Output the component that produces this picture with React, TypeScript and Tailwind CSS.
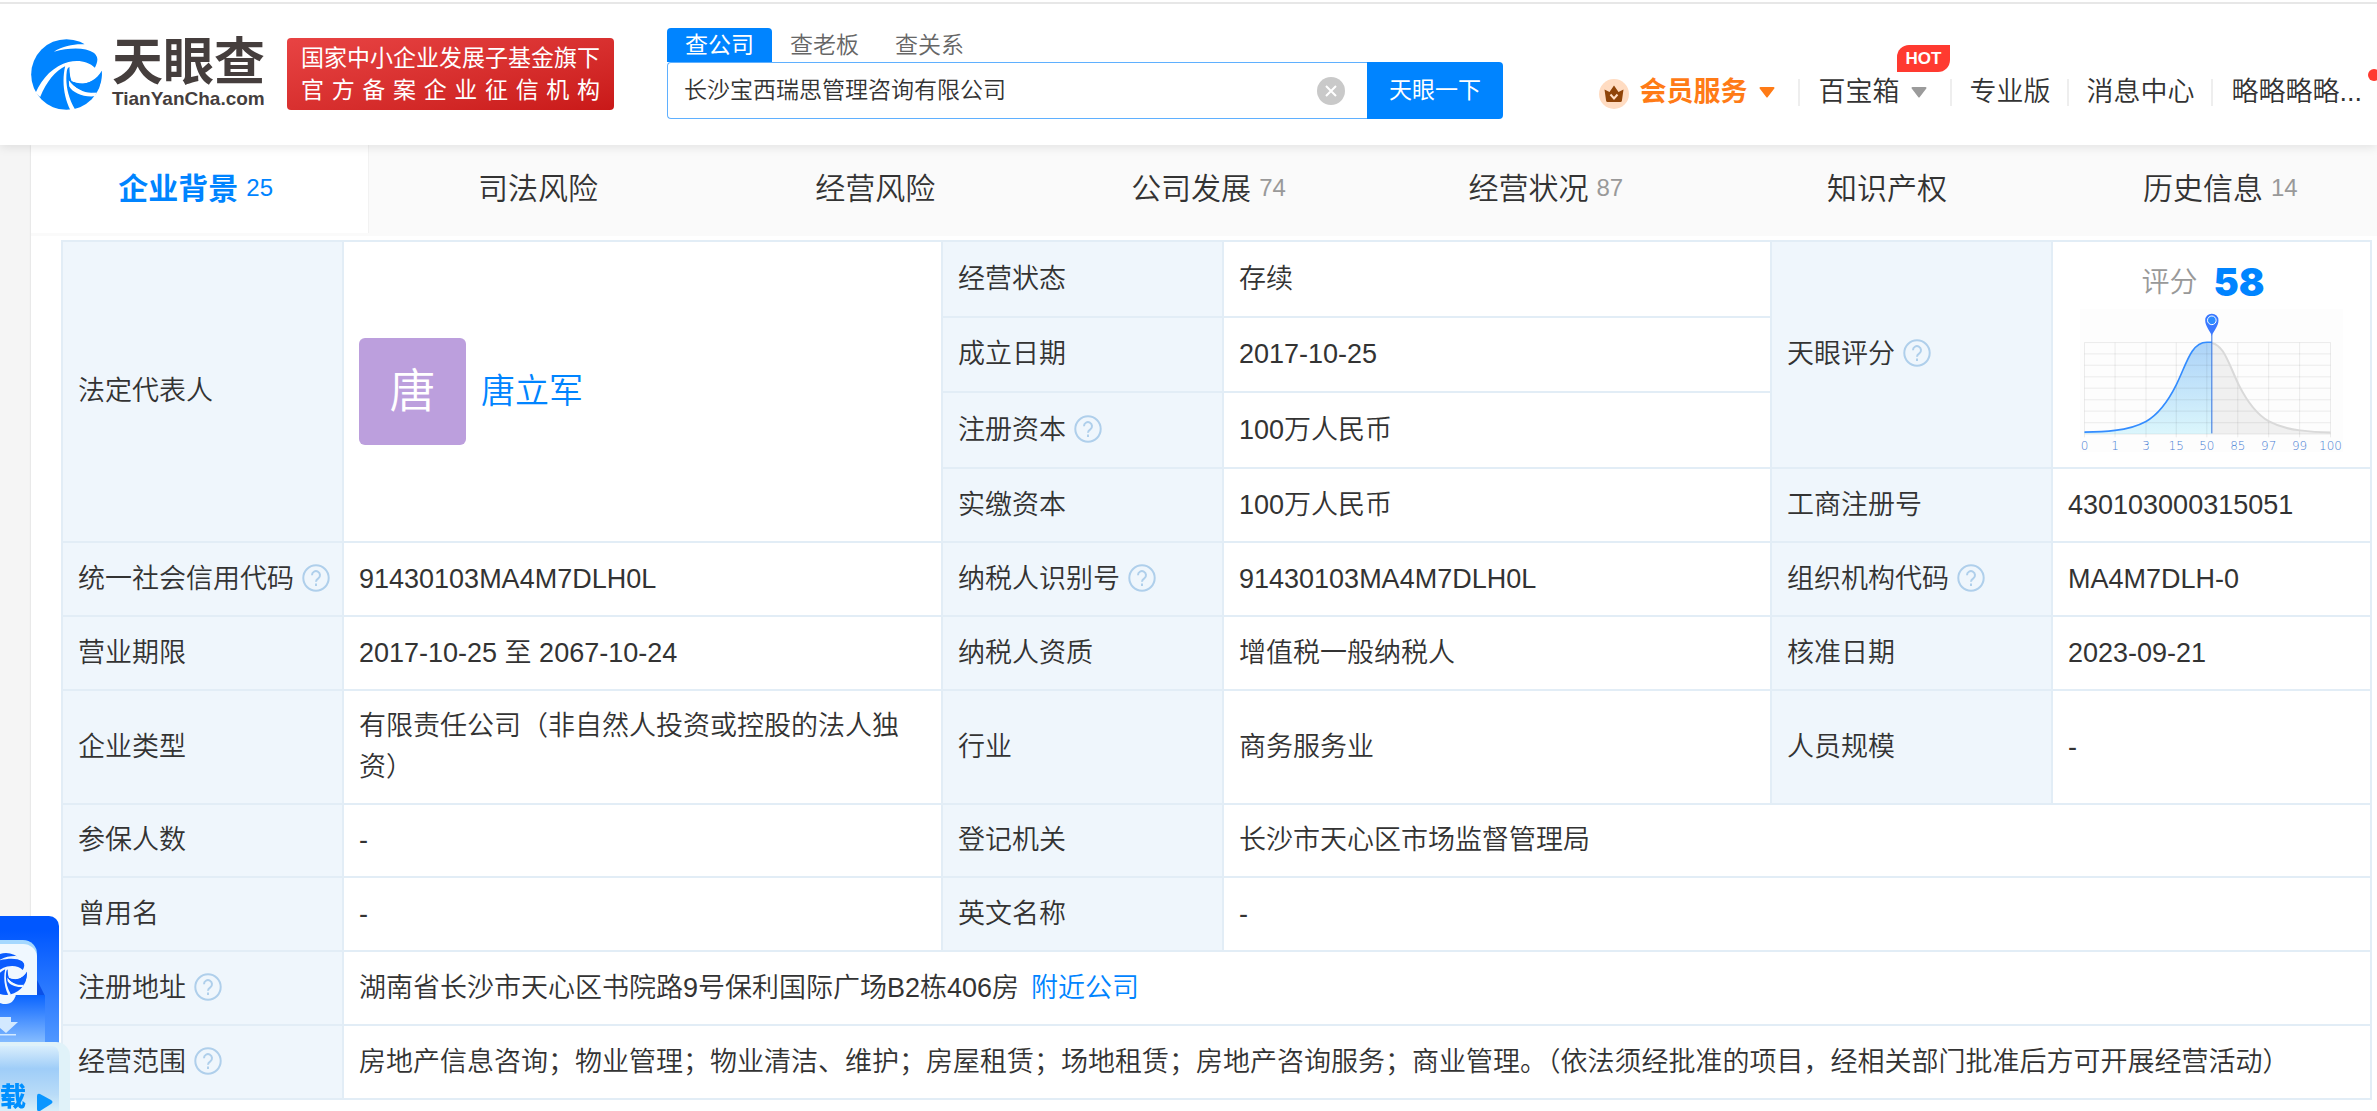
import React from "react";

function BrandMark({ className, color = "#0084ff", gap = "#fff" }: { className: string; color?: string; gap?: string }) {
  return (
    <svg viewBox="35 42 212 213" className={className} aria-hidden="true">
      <circle cx="141" cy="148.500" r="106" fill={color} />
      <g fill={gap}>
        <path d="M103 80C132 62 168 56 194 58L215 40L262 60V140L247 137C244 150 232 160 218 168C200 178 176 177 156 168C152 156 149 145 150 126C146 127 143 132 142 138C137 175 144 215 166 252L154 258C134 220 126 170 137 124C108 138 82 168 62 216L48 204C68 158 104 122 147 111C177 103 208 110 226 128C236 110 237 92 224 84C196 66 150 68 103 80Z" />
        <path d="M148 166C163 188 190 202 232 203L226 214C190 217 160 204 149 184Z" />
      </g>
      <path d="M150 122C149 150 155 163 161 171C188 185 226 172 247 137C247 170 238 190 228 202C200 207 172 196 149 166Z" fill={color} />
      <path d="M156 168C186 180 218 170 236 148C226 140 200 120 172 116C150 116 147 140 156 168Z" fill={gap} />
    </svg>
  );
}

function HelpIcon() {
  return (
    <button type="button" aria-label="说明" className="ml-2 inline-flex align-[-4px]">
      <svg viewBox="0 0 28 28" className="size-7" fill="none" stroke="#afcfeb" strokeWidth="2" aria-hidden="true">
        <circle cx="14" cy="14" r="12.700" />
        <path d="M10 11.200a4 4 0 1 1 6.300 3.200c-1.500 1-2.300 1.600-2.300 3.400" />
        <path d="M14 19.400v2.600" />
      </svg>
    </button>
  );
}

function Caret({ className }: { className: string }) {
  return (
    <svg viewBox="0 0 16 11" className={className} aria-hidden="true">
      <path d="M1.500 0h13a1 1 0 0 1 .8 1.600L8.800 10a1 1 0 0 1-1.600 0L.7 1.600A1 1 0 0 1 1.500 0Z" fill="currentColor" />
    </svg>
  );
}

function Crown() {
  return (
    <svg viewBox="0 0 30 30" className="mt-1 mr-2.5 size-[30px]" aria-hidden="true">
      <circle cx="15" cy="15" r="15" fill="#ffdcc2" />
      <path d="M5.500 10.500l5 2.500L15 6.500l4.500 6.500 5-2.500-1.600 11.200a1.500 1.500 0 0 1-1.500 1.300H8.600a1.500 1.500 0 0 1-1.500-1.300Z" fill="#8f4409" />
      <path d="M11.500 15.500l3.500 4 3.500-4" fill="none" stroke="#ffdcc2" strokeWidth="2" />
    </svg>
  );
}

const GRID_X = [131, 223, 316, 407, 499, 592, 685, 778, 871];
const GRID_Y = [321, 355, 389, 424, 458, 493, 527, 562, 596];
const TICKS = ["0", "1", "3", "15", "50", "85", "97", "99", "100"];

function ScoreChart() {
  return (
    <svg viewBox="112 220 802 430" className="mx-auto block h-[143px] w-[267px]" role="img" aria-label="评分分布">
      <defs>
        <linearGradient id="area" x1="0" y1="0" x2="0" y2="1">
          <stop offset="0" stopColor="#acd3f8" />
          <stop offset="1" stopColor="#dbf6fc" />
        </linearGradient>
      </defs>
      <rect x="118" y="220" width="790" height="430" fill="#fdfdfd" />
      <path d="M503 320C520 320 534 328 547 347C564 372 577 412 595 448C617 492 647 536 686 558C712 572 744 581 779 585C807 589 837 591 871 591V596H503Z" fill="#f0f0f0" />
      <path d="M131 590C165 590 195 589 223 585C258 581 290 572 316 558C355 536 385 492 407 448C425 412 438 372 455 347C468 328 482 320 499 320H514V596H131Z" fill="url(#area)" />
      <g stroke="#000" strokeOpacity="0.080" strokeWidth="3">
        {GRID_X.map((x) => <line key={x} x1={x} x2={x} y1="321" y2="606" />)}
        {GRID_Y.map((y) => <line key={y} x1="131" x2="871" y1={y} y2={y} />)}
      </g>
      <path d="M514 322C528 325 538 334 547 347C564 372 577 412 595 448C617 492 647 536 686 558C712 572 744 581 779 585C807 589 837 591 871 591" fill="none" stroke="#d9d9d9" strokeWidth="6" />
      <path d="M131 590C165 590 195 589 223 585C258 581 290 572 316 558C355 536 385 492 407 448C425 412 438 372 455 347C468 328 482 320 499 320H514" fill="none" stroke="#338cff" strokeWidth="5" />
      <path d="M514 296V594" stroke="#2f6fe0" strokeWidth="3" />
      <path d="M514 301C509 287 494 272 494 254A20 20 0 0 1 534 254C534 272 519 287 514 301Z" fill="#3a78ff" />
      <circle cx="514" cy="254" r="13" fill="#2c8cff" stroke="#fff" strokeWidth="3" />
      {TICKS.map((t, i) => (
        <text key={t} x={GRID_X[i]} y="643" textAnchor="middle" fontSize="36" fill="#4a7fd4" className="font-['DejaVu_Sans',sans-serif]">{t}</text>
      ))}
    </svg>
  );
}

function Th({ children, help, rowSpan }: { children: React.ReactNode; help?: boolean; rowSpan?: number }) {
  return (
    <th scope="row" rowSpan={rowSpan} className="border-2 border-[#e2edf6] bg-[#eff6fc] px-[15px] text-left align-middle font-[350] whitespace-nowrap">
      {children}
      {help && <HelpIcon />}
    </th>
  );
}

function Td({ children, rowSpan, colSpan }: { children: React.ReactNode; rowSpan?: number; colSpan?: number }) {
  return (
    <td rowSpan={rowSpan} colSpan={colSpan} className="border-2 border-[#e2edf6] px-[15px] align-middle">
      {children}
    </td>
  );
}

const TABS: { name: string; count?: number }[] = [
  { name: "企业背景", count: 25 },
  { name: "司法风险" },
  { name: "经营风险" },
  { name: "公司发展", count: 74 },
  { name: "经营状况", count: 87 },
  { name: "知识产权" },
  { name: "历史信息", count: 14 },
];

function Separator() {
  return <span className="h-[27px] w-0.5 bg-[#eeeeee]" />;
}

function Header() {
  return (
    <header className="relative z-10 flex h-[145px] items-start border-t-2 border-white bg-white pl-[31px] shadow-[0_2px_10px_rgba(0,0,0,0.100)]">
      <div className="absolute inset-x-0 top-0 h-0.5 bg-[#e7e7e7]" />
      <a href="#home" className="mt-9 flex gap-[10px]">
        <BrandMark className="mt-px size-[71px]" />
        <span className="flex w-[154px] flex-col text-[#453e3d]">
          <span className="text-[51px]/[50px] font-bold whitespace-nowrap">天眼查</span>
          <span className="text-[19px]/[22px] font-bold">TianYanCha.com</span>
        </span>
      </a>
      <div className="mt-9 ml-[21px] h-[72px] w-[327px] rounded bg-linear-to-br from-[#e84343] to-[#c91818] px-[14px] pt-1 text-[23px]/8 font-normal whitespace-nowrap text-white">
        <p>国家中小企业发展子基金旗下</p>
        <p className="[text-align-last:justify]">官方备案企业征信机构</p>
      </div>
      <form className="mt-[26px] ml-[53px] w-[836px]" onSubmit={(e) => e.preventDefault()}>
        <div className="flex h-[34px] text-[23px]/[34px]">
          <button type="button" className="rounded-t bg-[#0084ff] px-[18px] font-normal text-white">查公司</button>
          <button type="button" className="px-[18px] text-[#666]">查老板</button>
          <button type="button" className="px-[18px] text-[#666]">查关系</button>
        </div>
        <div className="flex h-[57px]">
          <div className="flex flex-1 items-center rounded-l border border-r-0 border-[#5fb0ff] pr-[22px] pl-4">
            <input aria-label="公司名称" defaultValue="长沙宝西瑞思管理咨询有限公司" className="min-w-0 flex-1 text-[23px] text-[#333] outline-none" />
            <button type="button" aria-label="清除">
              <svg viewBox="0 0 28 28" className="size-7" aria-hidden="true">
                <circle cx="14" cy="14" r="14" fill="#c9c9c9" />
                <path d="M9 9l10 10M19 9L9 19" stroke="#fff" strokeWidth="2" />
              </svg>
            </button>
          </div>
          <button type="submit" className="w-[136px] rounded-r bg-[#0084ff] text-[23px] font-normal text-white">天眼一下</button>
        </div>
      </form>
      <nav className="mt-[70px] ml-auto flex h-10 items-center text-[27px]/10 whitespace-nowrap text-[#333]">
        <a href="#vip" className="flex items-center pr-[23px] font-bold text-[#ff7b16]">
          <Crown />会员服务<Caret className="ml-[12px] h-[11px] w-4" />
        </a>
        <Separator />
        <a href="#tools" className="relative flex items-center pr-[23px] pl-[18px]">
          百宝箱<Caret className="ml-[12px] h-[11px] w-4 text-[#9b9b9b]" />
          <span className="absolute -top-[27px] right-0 rounded-tl-xl rounded-br-xl bg-[#ff3a30] px-[9px] text-[17px]/[27px] font-bold text-white">HOT</span>
        </a>
        <Separator />
        <a href="#pro" className="px-[17px]">专业版</a>
        <Separator />
        <a href="#messages" className="px-[17px]">消息中心</a>
        <Separator />
        <a href="#account" className="relative pr-[15px] pl-[18px]">
          略略略略...
          <span className="absolute -top-[3px] -right-[3px] size-3 rounded-full bg-[#ff3a30]" />
        </a>
      </nav>
    </header>
  );
}

function DownloadWidget() {
  return (
    <a href="#download" aria-label="下载" className="fixed bottom-0 left-0 z-20 block h-[195px] w-[70px] overflow-hidden">
      <svg viewBox="0 0 70 195" className="absolute inset-0 size-full" aria-hidden="true">
        <defs>
          <linearGradient id="panel" x1="0" y1="0" x2="0" y2="1">
            <stop offset="0.100" stopColor="#0057ff" />
            <stop offset="1" stopColor="#5a9fff" />
          </linearGradient>
          <linearGradient id="folder" x1="0" y1="0" x2="0" y2="1">
            <stop offset="0" stopColor="#0a64ff" />
            <stop offset="1" stopColor="#8fc3ff" />
          </linearGradient>
          <linearGradient id="glass" x1="0" y1="0" x2="0" y2="1">
            <stop offset="0" stopColor="#d9eefc" />
            <stop offset="0.350" stopColor="#9fcdf8" />
            <stop offset="0.750" stopColor="#b9dcf8" />
            <stop offset="1" stopColor="#d9eff8" />
          </linearGradient>
        </defs>
        <path d="M0 0H49A10 10 0 0 1 59 10V140H0Z" fill="url(#panel)" />
        <path d="M37 64L45 80V85H37Z" fill="#0a50e8" />
        <path d="M0 24H23A14 14 0 0 1 37 38V80H0Z" fill="#a5d8ff" />
        <path d="M0 28H23A14 14 0 0 1 37 40V80H0Z" fill="#f0f8ff" />
        <path d="M0 79H45V130H0Z" fill="url(#folder)" />
        <path d="M0 78H16C15 84 11 88 6 88C4 88 2 88 0 87Z" fill="#f0f8ff" />
        <path d="M0 101H11V106H18L6 117L0 112ZM0 118H16V119.500H0Z" fill="#d3e9ff" />
        <path d="M0 126H56A14 14 0 0 1 70 140V195H0Z" fill="#e0f2f9" />
        <path d="M0 130H52Q59 130 59 140V195H0Z" fill="url(#glass)" />
        <path d="M37 180q0-3 3-2l11 6q3 2 0 4l-11 7q-3 1-3-2Z" fill="#0a96ff" />
      </svg>
      <span className="absolute top-[37px] -left-[15px]">
        <BrandMark className="size-[42px]" color="#0a5cff" gap="#f0f8ff" />
      </span>
      <span className="absolute top-[168px] left-0 text-[26px]/[27px] font-black text-[#0090ff]">载</span>
    </a>
  );
}

export default function App() {
  return (
    <div className="min-h-screen overflow-hidden bg-[#f5f5f5] font-['Liberation_Sans','Noto_Sans_CJK_SC',sans-serif] font-[350] text-[#333]">
      <Header />
      <main className="ml-[31px] min-h-[966px] bg-white shadow-[0_0_2px_rgba(0,0,0,0.150)]">
        <nav className="-mr-4 flex h-[91px] border-b-[3px] border-[#fafafa] bg-[#fafafa]">
          {TABS.map((tab, i) => (
            <a
              key={tab.name}
              href={"#" + tab.name}
              className={
                i === 0
                  ? "flex flex-1 items-center justify-center gap-2 border-r border-[#f2f2f2] bg-white pb-0.5 text-[30px] font-bold text-[#0084ff]"
                  : "flex flex-1 items-center justify-center gap-2 pb-0.5 text-[30px] text-[#333]"
              }
            >
              {tab.name}
              {tab.count && <span className={i === 0 ? "mr-2 text-[24px] font-normal" : "mr-2 text-[24px] text-[#999]"}>{tab.count}</span>}
            </a>
          ))}
        </nav>
        <div className="pt-1 pr-[5px] pl-[30px]">
          <table className="w-full table-fixed border-collapse text-[27px]/[41px]">
            <colgroup>
              <col className="w-[281px]" />
              <col className="w-[599px]" />
              <col className="w-[281px]" />
              <col className="w-[548px]" />
              <col className="w-[281px]" />
              <col />
            </colgroup>
            <tbody>
              <tr className="h-[76px]">
                <Th rowSpan={4}>法定代表人</Th>
                <Td rowSpan={4}>
                  <div className="flex items-center gap-[15px]">
                    <span className="flex size-[107px] items-center justify-center rounded-md bg-[#bc9fdd] text-[46px] text-white">唐</span>
                    <a href="#person" className="text-[34px] text-[#0084ff]">唐立军</a>
                  </div>
                </Td>
                <Th>经营状态</Th>
                <Td>存续</Td>
                <Th rowSpan={3} help>天眼评分</Th>
                <Td rowSpan={3}>
                  <div className="mb-1.5 flex items-center justify-center gap-4 pt-1 pr-[17px]">
                    <span className="text-[28px] text-[#999]">评分</span>
                    <strong className="font-['Inter',sans-serif] text-[38px] font-black text-[#0084ff]">58</strong>
                  </div>
                  <ScoreChart />
                </Td>
              </tr>
              <tr className="h-[75px]">
                <Th>成立日期</Th>
                <Td>2017-10-25</Td>
              </tr>
              <tr className="h-[76px]">
                <Th help>注册资本</Th>
                <Td>100万人民币</Td>
              </tr>
              <tr className="h-[74px]">
                <Th>实缴资本</Th>
                <Td>100万人民币</Td>
                <Th>工商注册号</Th>
                <Td>430103000315051</Td>
              </tr>
              <tr className="h-[74px]">
                <Th help>统一社会信用代码</Th>
                <Td>91430103MA4M7DLH0L</Td>
                <Th help>纳税人识别号</Th>
                <Td>91430103MA4M7DLH0L</Td>
                <Th help>组织机构代码</Th>
                <Td>MA4M7DLH-0</Td>
              </tr>
              <tr className="h-[74px]">
                <Th>营业期限</Th>
                <Td>2017-10-25 至 2067-10-24</Td>
                <Th>纳税人资质</Th>
                <Td>增值税一般纳税人</Td>
                <Th>核准日期</Th>
                <Td>2023-09-21</Td>
              </tr>
              <tr className="h-[114px]">
                <Th>企业类型</Th>
                <Td>有限责任公司（非自然人投资或控股的法人独资）</Td>
                <Th>行业</Th>
                <Td>商务服务业</Td>
                <Th>人员规模</Th>
                <Td>-</Td>
              </tr>
              <tr className="h-[73px]">
                <Th>参保人数</Th>
                <Td>-</Td>
                <Th>登记机关</Th>
                <Td colSpan={3}>长沙市天心区市场监督管理局</Td>
              </tr>
              <tr className="h-[74px]">
                <Th>曾用名</Th>
                <Td>-</Td>
                <Th>英文名称</Th>
                <Td colSpan={3}>-</Td>
              </tr>
              <tr className="h-[74px]">
                <Th help>注册地址</Th>
                <Td colSpan={5}>
                  湖南省长沙市天心区书院路9号保利国际广场B2栋406房
                  <a href="#nearby" className="ml-3 text-[#0084ff]">附近公司</a>
                </Td>
              </tr>
              <tr className="h-[74px]">
                <Th help>经营范围</Th>
                <Td colSpan={5}>
                  房地产信息咨询；物业管理；物业清洁、维护；房屋租赁；场地租赁；房地产咨询服务；商业管理。（依法须经批准的项目，经相关部门批准后方可开展经营活动）
                </Td>
              </tr>
            </tbody>
          </table>
        </div>
      </main>
      <DownloadWidget />
    </div>
  );
}
